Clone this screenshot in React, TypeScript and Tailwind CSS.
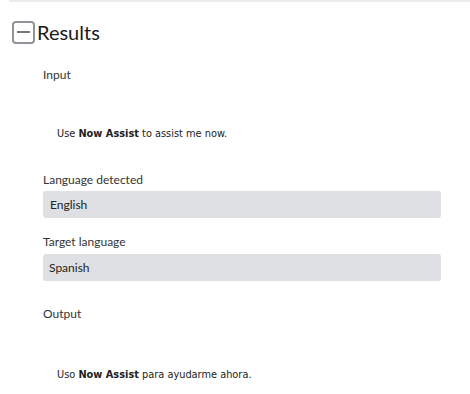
export default function App() {
  const label = "text-[12px] leading-[16px] text-[#333]";
  return (
    <div className="w-[470px] h-[394px] bg-white font-['Lato',sans-serif] text-[#1f1f1f]">
      <div className="ml-[9px] border-t-2 border-[#ececec]" />

      <div className="flex items-center mt-[17px] ml-[12px]">
        <span className="flex w-[23px] h-[23px] items-center justify-center rounded-[4px] border-2 border-[#909398]">
          <span className="block w-[13px] h-[2px] bg-[#73767b]" />
        </span>
        <h2 className="ml-[2px] text-[20px] leading-[26px] text-[#1a1a1a]">Results</h2>
      </div>

      <div className="pl-[43px] pr-[29px]">
        <div className={`${label} mt-[22px]`}>Input</div>
        <p className="mt-[45px] ml-[14px] text-[9.8px] leading-[12px] font-['DejaVu_Sans',sans-serif] text-[#222]">
          Use <b>Now Assist</b> to assist me now.
        </p>

        <div className={`${label} mt-[32px]`}>Language detected</div>
        <div className="mt-[3px] h-[27px] rounded-[3px] bg-[#dee0e3] px-[7px] flex items-center text-[12px] text-[#222]">
          English
        </div>

        <div className={`${label} mt-[16px]`}>Target language</div>
        <div className="mt-[4px] h-[27px] rounded-[3px] bg-[#dee0e3] px-[6px] flex items-center text-[12px] text-[#222]">
          Spanish
        </div>

        <div className={`${label} mt-[25px]`}>Output</div>
        <p className="mt-[47px] ml-[14px] text-[9.8px] leading-[12px] font-['DejaVu_Sans',sans-serif] text-[#222]">
          Uso <b>Now Assist</b> para ayudarme ahora.
        </p>
      </div>
    </div>
  );
}
